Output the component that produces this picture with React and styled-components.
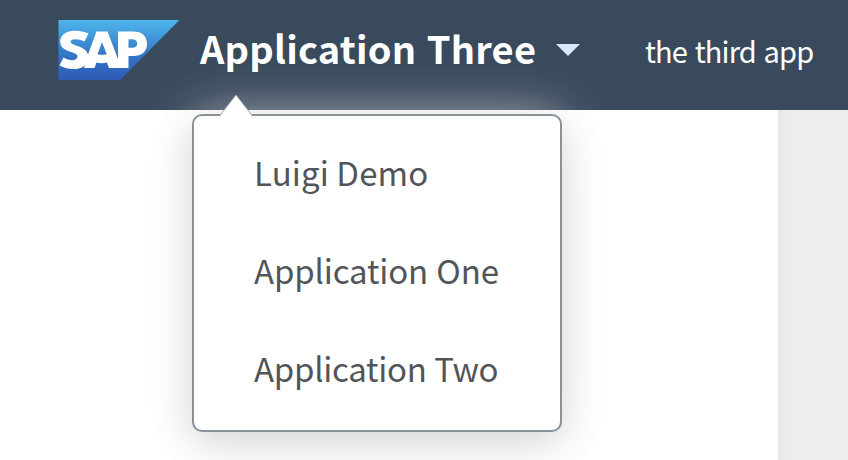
import React from "react";
import styled, { createGlobalStyle } from "styled-components";

const Global = createGlobalStyle`
  * { box-sizing: border-box; }
  body { margin: 0; background: #fff; overflow: hidden; font-family: "Noto Sans CJK SC", "Open Sans", sans-serif; }
`;

const Shell = styled.div`
  width: 848px;
  height: 460px;
  display: flex;
  flex-direction: column;
  overflow: hidden;
`;

const Header = styled.header`
  height: 110px;
  flex: none;
  display: flex;
  align-items: flex-start;
  padding: 20px 0 0 58px;
  background: #3a4a5d;
  color: #fff;
`;

const Logo = styled.svg`
  width: 122px;
  height: 60px;
  flex: none;
`;

const Switcher = styled.div`
  position: relative;
  width: 380px;
  margin-left: 20px;
`;

const Trigger = styled.button`
  display: flex;
  align-items: center;
  height: 60px;
  padding: 0;
  border: 0;
  background: none;
  color: #fff;
  font: 700 38px/56px "Noto Sans CJK SC", sans-serif;
  letter-spacing: 0.23px;
  word-spacing: 1.5px;
  white-space: nowrap;
`;

const Title = styled.span`
  width: 356px;
  height: 60px;
  text-align: left;
`;

const Caret = styled.svg`
  width: 24px;
  height: 12px;
  flex: none;
`;

const Subtitle = styled.span`
  margin-left: 65px;
  font-size: 29px;
  line-height: 60px;
  letter-spacing: -0.85px;
  word-spacing: 2px;
  white-space: nowrap;
`;

const Popover = styled.div`
  position: absolute;
  z-index: 1;
  top: 94px;
  left: -8px;
  width: 370px;
  height: 318px;
  padding: 10px 0;
  border: 2px solid #89919a;
  border-radius: 10px;
  background: #fff;
  box-shadow: 0 10px 60px rgba(0, 0, 0, 0.06), 0 10px 40px rgba(0, 0, 0, 0.13), 0 0 50px -3px rgba(255, 255, 255, 0.72);
`;

const Arrow = styled.svg`
  position: absolute;
  top: -23px;
  left: 24px;
  width: 36px;
  height: 25px;
`;

const Menu = styled.ul`
  display: flex;
  flex-direction: column;
  list-style: none;
  margin: 0;
  padding: 0;
`;

const Item = styled.li`
  height: 98px;
  padding-left: 60px;
  color: #51555a;
  font-size: 33px;
  line-height: 92px;
  letter-spacing: ${(p) => p.$tracking}px;
  word-spacing: ${(p) => p.$gap}px;
  white-space: nowrap;
`;

const Content = styled.main`
  flex: 1;
  display: flex;
`;

const Page = styled.section`
  width: 778px;
  background: #fff;
`;

const Side = styled.aside`
  flex: 1;
  background: radial-gradient(ellipse 66px 100px at 122px 260px, #ebeeec 98%, transparent 100%),
    linear-gradient(90deg, #e3e5e8 0, #e8eaec 4px, #ecedef 9px);
`;

function SapLogo() {
  return (
    <Logo viewBox="0 0 122 60" aria-label="SAP">
      <defs>
        <linearGradient id="sap" x1="0" y1="0" x2="0" y2="1">
          <stop offset="0" stopColor="#4fb5eb" />
          <stop offset="0.25" stopColor="#429bdb" />
          <stop offset="0.6" stopColor="#3474c7" />
          <stop offset="1" stopColor="#2d5bb6" />
        </linearGradient>
      </defs>
      <path d="M.5 0H121.500L62 60H.5Z" fill="url(#sap)" />
      <path
        fill="#fff"
        fillRule="evenodd"
        d="M30.500 13.500C25 11 20 10.300 15 10.800C7 11.500 2 16 2.200 22C2.500 28 8 30.500 14 32.200C18 33.500 19.500 34.500 19.500 36.500C19 41 12 41.500 5.500 37.500L1.500 45.500C7 48.500 14 49.800 20 48.700C23 48 25 47 26.800 45.500L26 48H36.500L38.500 42.500Q43.500 44 49 42.500L51 48H70.500V36H75C84 36 89 31.500 89 24C89 16 84 11.500 75 11.500H60V39L49.500 11.500H38.500L30 34.500C29 30 24 27.500 18 25.500C14 24.300 12.300 23 12.700 21.500C13.500 18.500 20 18.800 26.500 21.500ZM44 22L48.700 34.200Q44 35.500 39.500 34.200ZM70.500 19.300H73.500C77 19.300 79.200 20.800 79.200 23.500C79.200 26.500 77 27.800 73.500 27.800H70.500Z"
      />
    </Logo>
  );
}

const apps = [
  { name: "Luigi Demo", tracking: 0.1, gap: 0 },
  { name: "Application One", tracking: -0.14, gap: 1 },
  { name: "Application Two", tracking: -0.27, gap: 0.5 },
];

export default function App() {
  return (
    <Shell>
      <Global />
      <Header>
        <SapLogo />
        <Switcher>
          <Trigger>
            <Title>Application Three</Title>
            <Caret viewBox="0 0 24 12">
              <path d="M0 0H24L12 12Z" fill="#d9e7fc" />
            </Caret>
          </Trigger>
          <Popover>
            <Arrow viewBox="0 0 36 25">
              <path d="M1.500 23L18 2L34.500 23V25H1.500Z" fill="#fff" />
              <path d="M1.500 23L18 2L34.500 23" fill="none" stroke="#a2a8ae" strokeWidth="1" />
            </Arrow>
            <Menu>
              {apps.map(({ name, tracking, gap }) => (
                <Item key={name} $tracking={tracking} $gap={gap}>
                  {name}
                </Item>
              ))}
            </Menu>
          </Popover>
        </Switcher>
        <Subtitle>the third app</Subtitle>
      </Header>
      <Content>
        <Page />
        <Side />
      </Content>
    </Shell>
  );
}
